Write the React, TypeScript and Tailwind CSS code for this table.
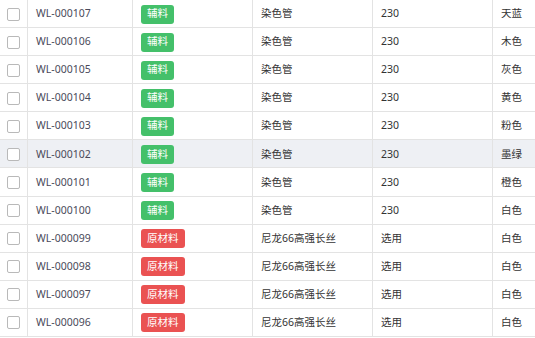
const rows = [
  { code: 'WL-000107', type: 'aux', name: '染色管', spec: '230', color: '天蓝' },
  { code: 'WL-000106', type: 'aux', name: '染色管', spec: '230', color: '木色' },
  { code: 'WL-000105', type: 'aux', name: '染色管', spec: '230', color: '灰色' },
  { code: 'WL-000104', type: 'aux', name: '染色管', spec: '230', color: '黄色' },
  { code: 'WL-000103', type: 'aux', name: '染色管', spec: '230', color: '粉色' },
  { code: 'WL-000102', type: 'aux', name: '染色管', spec: '230', color: '墨绿' },
  { code: 'WL-000101', type: 'aux', name: '染色管', spec: '230', color: '橙色' },
  { code: 'WL-000100', type: 'aux', name: '染色管', spec: '230', color: '白色' },
  { code: 'WL-000099', type: 'raw', name: '尼龙66高强长丝', spec: '选用', color: '白色' },
  { code: 'WL-000098', type: 'raw', name: '尼龙66高强长丝', spec: '选用', color: '白色' },
  { code: 'WL-000097', type: 'raw', name: '尼龙66高强长丝', spec: '选用', color: '白色' },
  { code: 'WL-000096', type: 'raw', name: '尼龙66高强长丝', spec: '选用', color: '白色' },
];

const font = { fontFamily: '"Noto Sans", "Noto Sans CJK SC", sans-serif' };

export default function App() {
  return (
    <div className="w-[535px] h-[338px] overflow-hidden bg-white" style={font}>
      {rows.map((r, i) => (
        <div
          key={r.code}
          className={
            'grid grid-cols-[28px_105px_120px_120px_120px_1fr] h-[28.09px] border-b border-[#e3e3e3] text-[10.5px] text-[#333] ' +
            (i === 5 ? 'bg-[#eef0f4]' : 'bg-white')
          }
        >
          <div className="flex items-center justify-center border-r border-[#e3e3e3] pt-[1px]">
            <span className="w-[13px] h-[13px] rounded-[2px] border border-[#b9b9b9] bg-white" />
          </div>
          <div className="flex items-center pl-[8px] pt-[1px] border-r border-[#e3e3e3] text-[#4a4a5a]">{r.code}</div>
          <div className="flex items-center pl-[8px] pt-[1px] border-r border-[#e3e3e3]">
            {r.type === 'aux' ? (
              <span className="h-[19px] px-[6px] flex items-center rounded-[3px] bg-[#44c06a] text-white">辅料</span>
            ) : (
              <span className="h-[19px] px-[6px] flex items-center rounded-[3px] bg-[#ea5252] text-white">原材料</span>
            )}
          </div>
          <div className="flex items-center pl-[8px] pt-[1px] border-r border-[#e3e3e3]">{r.name}</div>
          <div className="flex items-center pl-[8px] pt-[1px] border-r border-[#e3e3e3]">{r.spec}</div>
          <div className="flex items-center pl-[8px] pt-[1px]">{r.color}</div>
        </div>
      ))}
    </div>
  );
}
